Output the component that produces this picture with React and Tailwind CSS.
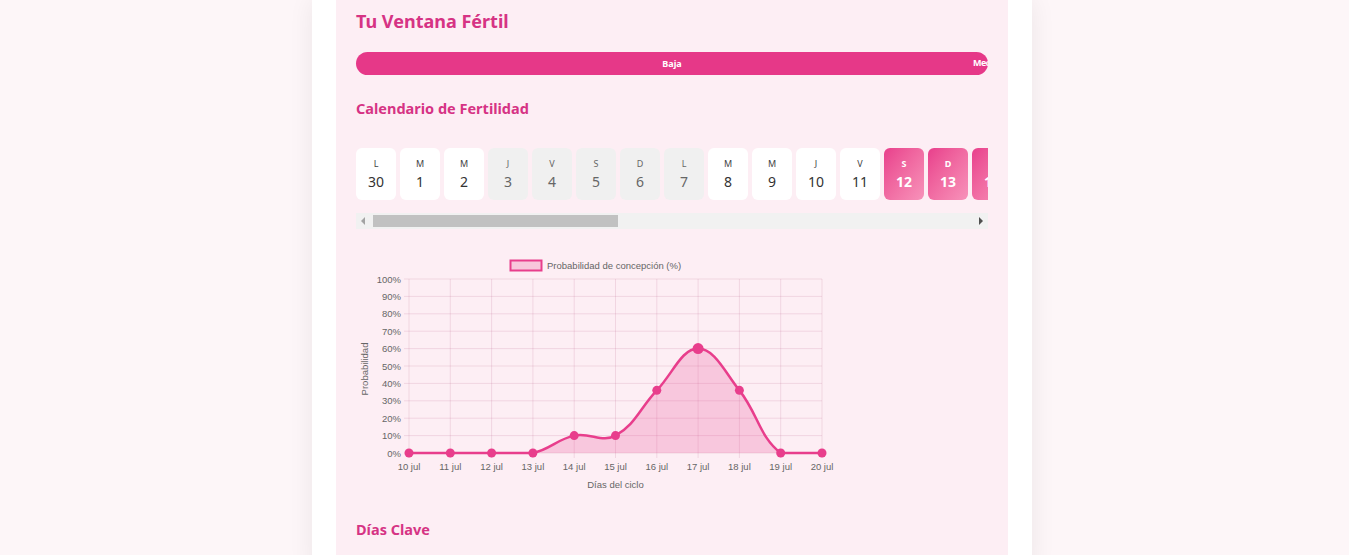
import React from "react";

const days = [
  { l: "L", n: 30, t: "white" },
  { l: "M", n: 1, t: "white" },
  { l: "M", n: 2, t: "white" },
  { l: "J", n: 3, t: "gray" },
  { l: "V", n: 4, t: "gray" },
  { l: "S", n: 5, t: "gray" },
  { l: "D", n: 6, t: "gray" },
  { l: "L", n: 7, t: "gray" },
  { l: "M", n: 8, t: "white" },
  { l: "M", n: 9, t: "white" },
  { l: "J", n: 10, t: "white" },
  { l: "V", n: 11, t: "white" },
  { l: "S", n: 12, t: "pink" },
  { l: "D", n: 13, t: "pink" },
  { l: "L", n: 14, t: "pink" },
];

const values = [0, 0, 0, 0, 10, 10, 36, 60, 36, 0, 0];
const labels = ["10 jul", "11 jul", "12 jul", "13 jul", "14 jul", "15 jul", "16 jul", "17 jul", "18 jul", "19 jul", "20 jul"];

// plot area inside the svg
const L = 53;
const R = 466;
const T = 24;
const B = 198;

const DayCard = ({ day }) => {
  const base = "flex-none w-[40px] h-[52px] rounded-[6px] flex flex-col items-center justify-center";
  if (day.t === "pink") {
    return (
      <div className={`${base} bg-gradient-to-br from-[#e83e8c] to-[#f792ba] text-white font-bold`}>
        <span className="text-[9px] leading-[12px] mt-[1px]">{day.l}</span>
        <span className="text-[14px] leading-[20px] mt-[2px]">{day.n}</span>
      </div>
    );
  }
  const gray = day.t === "gray";
  return (
    <div className={`${base} ${gray ? "bg-[#f0f0f0]" : "bg-white"}`}>
      <span className={`text-[9px] leading-[12px] mt-[1px] ${gray ? "text-[#666]" : "text-[#444]"}`}>{day.l}</span>
      <span className={`text-[14px] leading-[20px] mt-[2px] ${gray ? "text-[#666]" : "text-[#333]"}`}>{day.n}</span>
    </div>
  );
};

const buildPath = (pts) => {
  // same idea as chart.js splineCurve with tension 0.4
  const t = 0.4;
  const cps = pts.map((p, i) => {
    const prev = pts[i - 1] || p;
    const next = pts[i + 1] || p;
    const d01 = Math.hypot(p.x - prev.x, p.y - prev.y);
    const d12 = Math.hypot(next.x - p.x, next.y - p.y);
    let s01 = d01 / (d01 + d12);
    let s12 = d12 / (d01 + d12);
    if (isNaN(s01)) s01 = 0;
    if (isNaN(s12)) s12 = 0;
    const fa = t * s01;
    const fb = t * s12;
    const clampY = (y) => Math.min(B, Math.max(T, y));
    return {
      c1: { x: p.x - fa * (next.x - prev.x), y: clampY(p.y - fa * (next.y - prev.y)) },
      c2: { x: p.x + fb * (next.x - prev.x), y: clampY(p.y + fb * (next.y - prev.y)) },
    };
  });
  let d = `M${pts[0].x},${pts[0].y}`;
  for (let i = 1; i < pts.length; i++) {
    const a = cps[i - 1].c2;
    const b = cps[i].c1;
    d += ` C${a.x},${a.y} ${b.x},${b.y} ${pts[i].x},${pts[i].y}`;
  }
  return d;
};

const FertilityChart = () => {
  const step = (R - L) / (values.length - 1);
  const pts = values.map((v, i) => ({ x: L + i * step, y: B - (v / 100) * (B - T) }));
  const line = buildPath(pts);
  const area = `${line} L${R},${B} L${L},${B} Z`;
  const ticks = [0, 10, 20, 30, 40, 50, 60, 70, 80, 90, 100];
  const grid = "rgba(180,90,130,0.16)";

  return (
    <svg width="480" height="245" className="block" style={{ fontFamily: "'Liberation Sans', Arial, sans-serif" }}>
      {/* legend */}
      <rect x="154.5" y="5.5" width="31" height="10" fill="#f8c7dc" stroke="#e83e8c" strokeWidth="2" />
      <text x="191" y="14" fontSize="9.5" fill="#666">Probabilidad de concepción (%)</text>

      {/* grid */}
      {ticks.map((v) => {
        const y = B - (v / 100) * (B - T);
        return (
          <g key={v}>
            <line x1={L - 5} x2={R} y1={y} y2={y} stroke={grid} strokeWidth="1" />
            <text x={L - 8} y={y + 3.5} fontSize="9.5" fill="#666" textAnchor="end">{v}%</text>
          </g>
        );
      })}
      {labels.map((lab, i) => {
        const x = L + i * step;
        return (
          <g key={lab}>
            <line x1={x} x2={x} y1={T} y2={B + 5} stroke={grid} strokeWidth="1" />
            <text x={x} y={B + 17} fontSize="9.5" fill="#666" textAnchor="middle">{lab}</text>
          </g>
        );
      })}

      <text x="9" y="111" fontSize="9.5" fill="#666" textAnchor="middle" transform="rotate(-90 12 111)">Probabilidad</text>
      <text x={(L + R) / 2} y="233" fontSize="9.5" fill="#666" textAnchor="middle">Días del ciclo</text>

      {/* data */}
      <path d={area} fill="rgba(232,62,140,0.22)" />
      <path d={line} fill="none" stroke="#e83e8c" strokeWidth="2.5" />
      {pts.map((p, i) => (
        <circle key={i} cx={p.x} cy={p.y} r={i === 7 ? 5.5 : 4.5} fill="#e83e8c" />
      ))}
    </svg>
  );
};

export default function App() {
  return (
    <div className="min-h-screen bg-[#fdf6f8] flex justify-center pr-[5px]" style={{ fontFamily: "'Noto Sans', 'Open Sans', sans-serif" }}>
      <div className="w-[720px] bg-white px-6 shadow-[0_0_24px_rgba(0,0,0,0.07)]">
        <div className="bg-[#fdeef4] px-5 pt-[7px] pb-8 min-h-screen">
          <h2 className="text-[18px] leading-[28px] font-bold text-[#d63384]">Tu Ventana Fértil</h2>

          {/* fertility level bar */}
          <div className="relative mt-[17px] h-[23px] rounded-full bg-[#e63888] overflow-hidden">
            <div className="absolute inset-0 flex items-center justify-center">
              <span className="text-[9px] font-bold text-white">Baja</span>
            </div>
            <span className="absolute left-[617px] top-[4px] text-[9px] font-bold text-white tracking-[-0.5px]">Media</span>
          </div>

          <h3 className="mt-[22px] text-[14.5px] leading-[22px] font-bold text-[#d63384]">Calendario de Fertilidad</h3>

          {/* day strip */}
          <div className="mt-[29px] overflow-hidden">
            <div className="flex gap-[4px]">
              {days.map((d, i) => (
                <DayCard key={i} day={d} />
              ))}
            </div>
          </div>
          <div className="mt-[13px] h-[16px] bg-[#f1f1f1] flex items-center relative">
            <span className="absolute left-[5px] top-[4px] w-0 h-0 border-y-[4px] border-y-transparent border-r-[4px] border-r-[#a3a3a3]" />
            <div className="absolute left-[17px] top-[2px] w-[245px] h-[12px] bg-[#c1c1c1]" />
            <span className="absolute right-[5px] top-[4px] w-0 h-0 border-y-[4px] border-y-transparent border-l-[4px] border-l-[#505050]" />
          </div>

          {/* chart */}
          <div className="mt-[26px]">
            <FertilityChart />
          </div>

          <h3 className="mt-[18px] text-[14.5px] leading-[22px] font-bold text-[#d63384]">Días Clave</h3>
        </div>
      </div>
    </div>
  );
}
